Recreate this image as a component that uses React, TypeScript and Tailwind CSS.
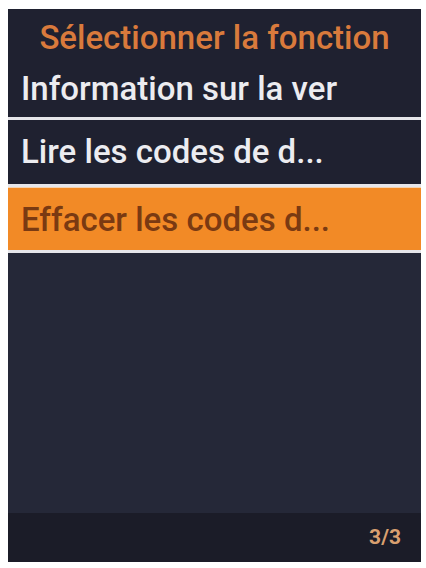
import React from 'react';

const rows = [
  { label: 'Information sur la ver', h: 'h-[55px]' },
  { label: 'Lire les codes de d...', h: 'h-[64px]' },
];

const App: React.FC = () => {
  return (
    <div className="w-[426px] h-[568px] bg-white pl-[8px] pt-[9px] overflow-hidden" style={{ fontFamily: 'Roboto, "Noto Sans", sans-serif' }}>
      <div className="w-[413px] h-[553px] flex flex-col bg-[#1f2130]">
        {/* Header */}
        <div className="h-[53px] flex items-center justify-center text-[#d97a3c] text-[33px] font-medium leading-none pt-[4px]">
          Sélectionner la fonction
        </div>

        {rows.map((r) => (
          <React.Fragment key={r.label}>
            <div className={`${r.h} flex items-center px-[13px] pb-[2px] text-[#ececf0] text-[33px] font-medium leading-none`}>
              {r.label}
            </div>
            <div className="h-[3px] bg-[#e6e6ea]" />
          </React.Fragment>
        ))}

        {/* Selected row */}
        <div className="h-[63px] flex items-center px-[13px] bg-[#f28a26] text-[#7a3a12] text-[33px] font-medium leading-none border-t border-[#f5d3b0]">
          Effacer les codes d...
        </div>
        <div className="h-[3px] bg-[#e6e6ea]" />

        {/* Empty area */}
        <div className="flex-1 bg-[#252838]" />

        {/* Footer */}
        <div className="h-[49px] bg-[#1b1c28] flex items-center justify-end pr-[20px] text-[#d9a070] text-[21px] font-bold">
          3/3
        </div>
      </div>
    </div>
  );
};

export default App;
